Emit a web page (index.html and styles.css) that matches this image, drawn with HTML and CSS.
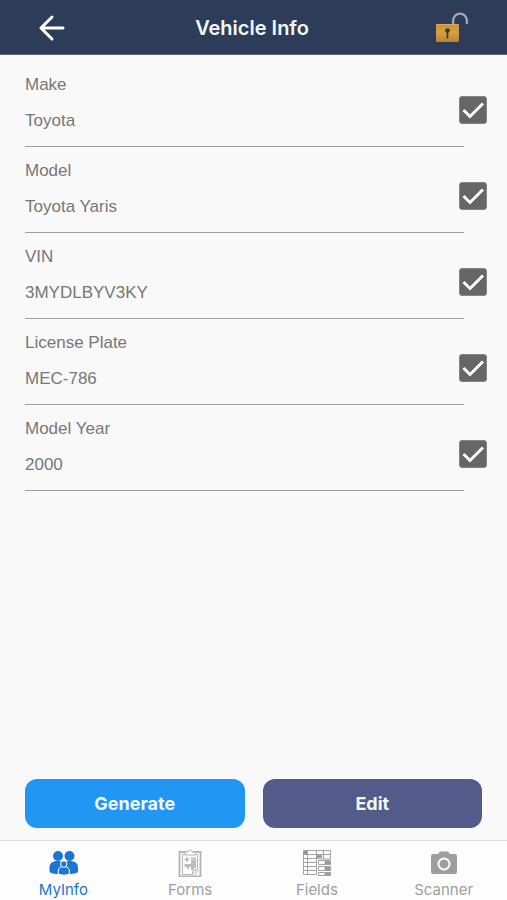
FILE: index.html
```html
<!DOCTYPE html>
<html lang="en">
<head>
    <meta charset="UTF-8">
    <meta name="viewport" content="width=device-width, initial-scale=1.0">
    <title>Vehicle Info</title>
    <link rel="stylesheet" href="styles.css">
</head>
<body>
    <header class="topbar">
        <button type="button" class="icon-button" aria-label="Back">
            <svg width="28" height="28" viewBox="0 0 28 28" fill="none" stroke="#fff" stroke-width="3" stroke-linecap="round" stroke-linejoin="round">
                <path d="M25 14H3M14 3L3 14l11 11"/>
            </svg>
        </button>
        <h1>Vehicle Info</h1>
        <button type="button" class="icon-button" aria-label="Unlock">
            <svg width="34" height="32" viewBox="0 0 34 32">
                <defs>
                    <linearGradient id="brass" x1="0" y1="0" x2="0" y2="1">
                        <stop offset="0" stop-color="#c4933d"/>
                        <stop offset="0.5" stop-color="#d99f43"/>
                        <stop offset="1" stop-color="#b9822f"/>
                    </linearGradient>
                </defs>
                <path d="M18 12V8.500a7 7 0 0 1 14 0V12" fill="none" stroke="#747e8b" stroke-width="2.600"/>
                <path d="M18.300 12V8.500a6.700 6.700 0 0 1 13.400 0V12" fill="none" stroke="#b3b9c0" stroke-width="1.200"/>
                <rect x="1" y="12" width="23" height="18" rx="1" fill="url(#brass)"/>
                <path d="M1.500 12.500h22" stroke="#d8ad62"/>
                <circle cx="12.500" cy="18.500" r="2.300" fill="#3b352e"/>
                <path d="M12.500 18v8.500" stroke="#3b352e" stroke-width="1.600"/>
            </svg>
        </button>
    </header>

    <main class="content">
        <form class="vehicle-form" id="vehicleForm">
            <div class="row">
                <div class="field">
                    <label for="make">Make</label>
                    <input type="text" id="make" value="Toyota">
                </div>
                <input type="checkbox" class="check" aria-label="Include make" checked>
            </div>
            <div class="row">
                <div class="field">
                    <label for="model">Model</label>
                    <input type="text" id="model" value="Toyota Yaris">
                </div>
                <input type="checkbox" class="check" aria-label="Include model" checked>
            </div>
            <div class="row">
                <div class="field">
                    <label for="vin">VIN</label>
                    <input type="text" id="vin" value="3MYDLBYV3KY">
                </div>
                <input type="checkbox" class="check" aria-label="Include VIN" checked>
            </div>
            <div class="row">
                <div class="field">
                    <label for="plate">License Plate</label>
                    <input type="text" id="plate" value="MEC-786">
                </div>
                <input type="checkbox" class="check" aria-label="Include license plate" checked>
            </div>
            <div class="row">
                <div class="field">
                    <label for="year">Model Year</label>
                    <input type="text" id="year" value="2000">
                </div>
                <input type="checkbox" class="check" aria-label="Include model year" checked>
            </div>
        </form>

        <div class="actions">
            <button type="submit" form="vehicleForm" class="btn btn-generate">Generate</button>
            <button type="button" class="btn btn-edit">Edit</button>
        </div>
    </main>

    <nav class="tabs">
        <a href="#myinfo" class="tab active">
            <svg width="30" height="28" viewBox="0 0 30 28" fill="currentColor">
                <circle cx="10" cy="7" r="5"/>
                <circle cx="21.500" cy="7" r="5"/>
                <path d="M1.500 23v-4c0-5 3-7 8-7s6 2 6.300 5c.3-3 1.200-5 6.200-5s8 2 8 7v4c-3 2-6 2-9 2H10.500c-3 0-6 0-9-2z"/>
                <g stroke="#fff" stroke-width="1">
                    <path d="M10.300 25v-3c0-3 2-4.500 5.500-4.500s5.500 1.500 5.500 4.500v3c-3 1.500-8 1.500-11 0z"/>
                    <circle cx="15.800" cy="15" r="3.200"/>
                </g>
            </svg>
            <span>MyInfo</span>
        </a>
        <a href="#forms" class="tab">
            <svg width="30" height="28" viewBox="0 0 30 28" fill="none" stroke="#b5b5b5">
                <path d="M4.500 3h21v24.500h-21z" stroke-width="1.800"/>
                <path d="M7.500 5.500h15V20l-5 5.500h-10z"/>
                <path d="M10 3h3c0-3 4-3 4 0h3v3H10z" fill="#fff"/>
                <path d="M17.500 25.500V22l5-2M19 27l5-6"/>
                <path d="M9.500 10.500h5M12 8v5" stroke-width="1.500"/>
                <path d="M16 8.500h5V19h-2v2h-3v-3h-2v2h-2v-2H9.500v-3H16z" fill="#bdbdbd" stroke="none"/>
                <path d="M16 10.500h4" stroke="#ddd"/>
            </svg>
            <span>Forms</span>
        </a>
        <a href="#fields" class="tab">
            <svg width="30" height="28" viewBox="0 0 30 28" fill="none" stroke="#a3a3a3">
                <path d="M1.500 1.500h27v8.500h-12M1.500 1.500v24h13v-24M5.500 1.500v24M1.500 5.500h27M1.500 9.500h15M1.500 13.500h13M1.500 17.500h13M1.500 21.500h13M21.500 1.500v8.500"/>
                <path d="M2 2h3.500v3.500H2zM14.500 6.500h5v2h-5z" fill="#919191"/>
                <path d="M16.500 11.500h12v4h-12zM16.500 17.500h12v4h-12zM16.500 23.500h12v3h-12z" fill="#fff"/>
                <path d="M23 12h5.500v3.500H23zM23 18h5.500v3.500H23zM23 24h5.500v2.500H23z" fill="#989898"/>
            </svg>
            <span>Fields</span>
        </a>
        <a href="#scanner" class="tab">
            <svg width="30" height="28" viewBox="0 0 30 28" fill="currentColor">
                <path d="M4 5h5l2-2.500h8L21 5h5a2 2 0 0 1 2 2v16a2 2 0 0 1-2 2H4a2 2 0 0 1-2-2V7a2 2 0 0 1 2-2z"/>
                <circle cx="15" cy="15" r="5.500" stroke="#fff" stroke-width="2"/>
            </svg>
            <span>Scanner</span>
        </a>
    </nav>
</body>
</html>
```
FILE: styles.css
```css
* {
    margin: 0;
    padding: 0;
    box-sizing: border-box;
}

body {
    font-family: 'Inter', sans-serif;
    background-color: #f9f9f9;
    min-height: 100vh;
    display: flex;
    flex-direction: column;
}

button {
    border: none;
    cursor: pointer;
}

/* Top bar */
.topbar {
    display: flex;
    align-items: center;
    justify-content: space-between;
    height: 55px;
    padding: 2px 39px 0 36px;
    background-color: #2d3d59;
    border-bottom: 1px solid #5b6679;
}

.topbar h1 {
    font-size: 20px;
    font-weight: 600;
    line-height: 24px;
    color: #f4f6fa;
}

.icon-button {
    display: flex;
    align-items: center;
    justify-content: center;
    width: 32px;
    height: 40px;
    background: none;
}

.icon-button svg {
    flex-shrink: 0;
}

/* Vehicle form */
.content {
    flex: 1;
    display: flex;
    flex-direction: column;
    justify-content: space-between;
    padding: 6px 0 12px;
}

.row {
    display: flex;
    align-items: flex-start;
    padding: 12px 20px 0 25px;
}

.field {
    flex: 1;
    font-family: 'Liberation Sans', Arial, sans-serif;
    font-size: 17px;
    color: #777;
}

.field label {
    display: block;
    line-height: 24px;
}

.field input {
    display: block;
    width: 100%;
    height: 50px;
    padding: 12px 0 13px;
    font: inherit;
    line-height: 24px;
    color: inherit;
    background: none;
    border: none;
    border-bottom: 1px solid #a0a0a0;
    border-radius: 0;
    outline: none;
}

/* the tick box hangs a little over the end of the underline */
.check {
    appearance: none;
    flex-shrink: 0;
    width: 28px;
    height: 28px;
    margin: 23px 0 0 -5px;
    border: 1px solid #858585;
    border-radius: 3px;
    background-color: #fff;
}

.check:checked {
    background: #666 url("data:image/svg+xml,%3Csvg xmlns='http://www.w3.org/2000/svg' viewBox='0 0 26 26'%3E%3Cpath d='M3.500 13l6.500 6.500L23 6.500' fill='none' stroke='%23fff' stroke-width='3'/%3E%3C/svg%3E") center / 26px no-repeat;
}

/* Buttons */
.actions {
    display: flex;
    gap: 18px;
    padding: 0 25px;
}

.btn {
    flex: 1;
    height: 49px;
    border-radius: 12px;
    font-family: inherit;
    font-size: 18px;
    font-weight: 700;
    color: #f4f8ff;
}

.btn-generate {
    background-color: #2196f3;
}

.btn-edit {
    background-color: #525b89;
}

/* Bottom tabs */
.tabs {
    display: flex;
    height: 60px;
    background-color: #fdfdfd;
    border-top: 1px solid #dedede;
}

.tab {
    flex: 1;
    display: flex;
    flex-direction: column;
    align-items: center;
    padding-top: 8px;
    font-size: 15px;
    line-height: 26px;
    color: #9e9e9e;
    text-decoration: none;
}

.tab svg {
    flex-shrink: 0;
}

.tab.active {
    color: #1976d2;
}
```
